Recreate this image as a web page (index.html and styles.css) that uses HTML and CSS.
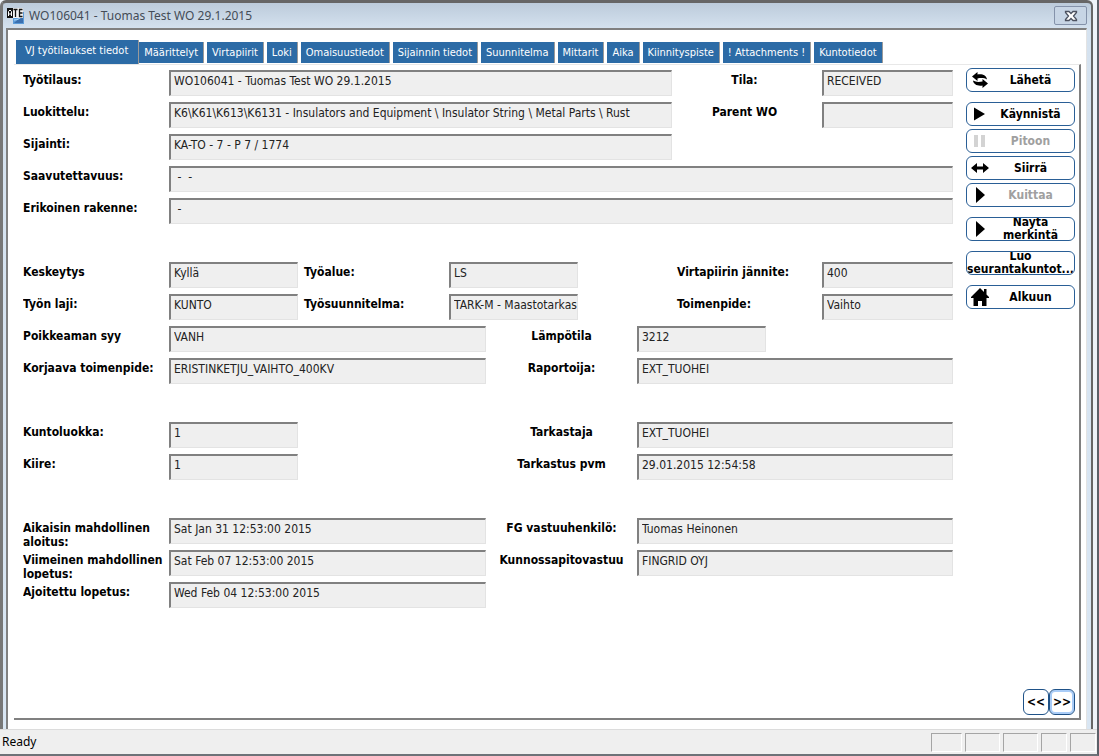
FILE: index.html
```html
<!DOCTYPE html>
<html lang="fi">
<head>
<meta charset="utf-8">
<title>WO106041 - Tuomas Test WO 29.1.2015</title>
<link rel="stylesheet" href="styles.css">
</head>
<body>
<div class="app">
  <div class="window">
    <header class="titlebar">
      <svg class="app-icon" width="20" height="18" viewBox="0 0 20 18" aria-hidden="true">
        <rect x="7" y="5" width="11" height="12" fill="#5b9bd8"/>
        <path d="M8 16h9V8z" fill="#3b6fae"/>
        <path d="M8 13c4 0 7-2 9-5" stroke="#b9dcf5" fill="none"/>
        <rect x="1" y="1" width="6" height="10" fill="#111"/>
        <rect x="7" y="1" width="10" height="10" fill="#f4f4f4"/>
        <path d="M2.500 9V4.500L4 3l1.500 1.500V9M2.500 7h3" stroke="#fff" fill="none"/>
        <path d="M7.500 2.500h4M9.500 2v8M16.500 2.500h-3v7h3M13.500 6h3" stroke="#111" stroke-width="1.300" fill="none"/>
      </svg>
      <h1 class="title">WO106041 - Tuomas Test WO 29.1.2015</h1>
      <button class="close" type="button" aria-label="Close">
        <svg width="14" height="12" viewBox="0 0 14 12" aria-hidden="true">
          <path d="M1.500 1.500h3.500l2 2 2-2h3.500v1L9.500 6l3 3.500v1H9l-2-2-2 2H1.500v-1l3-3.500-3-3.500z" fill="#fff" stroke="#4c5260" stroke-width="1.300"/>
        </svg>
      </button>
    </header>
    <main class="client">
      <nav class="tabs" role="tablist">
        <button class="tab tab-active" type="button" role="tab" aria-selected="true">VJ työtilaukset tiedot</button>
        <button class="tab" type="button" role="tab">Määrittelyt</button>
        <button class="tab" type="button" role="tab">Virtapiirit</button>
        <button class="tab" type="button" role="tab">Loki</button>
        <button class="tab" type="button" role="tab">Omaisuustiedot</button>
        <button class="tab" type="button" role="tab">Sijainnin tiedot</button>
        <button class="tab" type="button" role="tab">Suunnitelma</button>
        <button class="tab" type="button" role="tab">Mittarit</button>
        <button class="tab" type="button" role="tab">Aika</button>
        <button class="tab" type="button" role="tab">Kiinnityspiste</button>
        <button class="tab" type="button" role="tab">! Attachments !</button>
        <button class="tab" type="button" role="tab">Kuntotiedot</button>
      </nav>
      <section class="panel">
        <form class="form">
          <label class="label c1" for="wo">Työtilaus:</label>
          <input class="field f-long" id="wo" readonly value="WO106041 - Tuomas Test WO 29.1.2015">
          <label class="label c8 centered" for="status">Tila:</label>
          <input class="field f-last" id="status" readonly value="RECEIVED">

          <label class="label c1" for="class">Luokittelu:</label>
          <input class="field f-long" id="class" readonly value="K6\K61\K613\K6131 - Insulators and Equipment \ Insulator String \ Metal Parts \ Rust">
          <label class="label c8 centered" for="parent">Parent WO</label>
          <input class="field f-last" id="parent" readonly value="">

          <label class="label c1" for="location">Sijainti:</label>
          <input class="field f-long" id="location" readonly value="KA-TO - 7 - P 7 / 1774">

          <label class="label c1" for="access">Saavutettavuus:</label>
          <input class="field f-full" id="access" readonly value=" -  -">

          <label class="label c1" for="structure">Erikoinen rakenne:</label>
          <input class="field f-full" id="structure" readonly value=" -">

          <div class="spacer"></div>

          <label class="label c1" for="outage">Keskeytys</label>
          <input class="field f-short" id="outage" readonly value="Kyllä">
          <label class="label c3" for="area">Työalue:</label>
          <input class="field f-mid" id="area" readonly value="LS">
          <label class="label c8" for="voltage">Virtapiirin jännite:</label>
          <input class="field f-last" id="voltage" readonly value="400">

          <label class="label c1" for="worktype">Työn laji:</label>
          <input class="field f-short" id="worktype" readonly value="KUNTO">
          <label class="label c3" for="plan">Työsuunnitelma:</label>
          <input class="field f-mid" id="plan" readonly value="TARK-M - Maastotarkas">
          <label class="label c8" for="action">Toimenpide:</label>
          <input class="field f-last" id="action" readonly value="Vaihto">

          <label class="label c1" for="cause">Poikkeaman syy</label>
          <input class="field f-half" id="cause" readonly value="VANH">
          <label class="label c5 centered" for="temp">Lämpötila</label>
          <input class="field f-temp" id="temp" readonly value="3212">

          <label class="label c1" for="fix">Korjaava toimenpide:</label>
          <input class="field f-half" id="fix" readonly value="ERISTINKETJU_VAIHTO_400KV">
          <label class="label c5 centered" for="reporter">Raportoija:</label>
          <input class="field f-right" id="reporter" readonly value="EXT_TUOHEI">

          <div class="spacer"></div>

          <label class="label c1" for="condition">Kuntoluokka:</label>
          <input class="field f-short" id="condition" readonly value="1">
          <label class="label c5 centered" for="inspector">Tarkastaja</label>
          <input class="field f-right" id="inspector" readonly value="EXT_TUOHEI">

          <label class="label c1" for="urgency">Kiire:</label>
          <input class="field f-short" id="urgency" readonly value="1">
          <label class="label c5 centered" for="inspected">Tarkastus pvm</label>
          <input class="field f-right" id="inspected" readonly value="29.01.2015 12:54:58">

          <div class="spacer"></div>

          <label class="label c1" for="earliest">Aikaisin mahdollinen aloitus:</label>
          <input class="field f-half" id="earliest" readonly value="Sat Jan 31 12:53:00 2015">
          <label class="label c5 centered" for="owner">FG vastuuhenkilö:</label>
          <input class="field f-right" id="owner" readonly value="Tuomas Heinonen">

          <label class="label c1" for="latest">Viimeinen mahdollinen lopetus:</label>
          <input class="field f-half" id="latest" readonly value="Sat Feb 07 12:53:00 2015">
          <label class="label c5 centered" for="maint">Kunnossapitovastuu</label>
          <input class="field f-right" id="maint" readonly value="FINGRID OYJ">

          <label class="label c1" for="scheduled">Ajoitettu lopetus:</label>
          <input class="field f-half" id="scheduled" readonly value="Wed Feb 04 12:53:00 2015">
        </form>

        <aside class="side">
          <div class="actions">
            <button class="action" type="button">
              <svg class="icon" width="18" height="18" viewBox="0 0 18 18" aria-hidden="true"><path d="M1 5.500L6.500 1v2.500c5-.8 9 1 9.500 5C13.500 7 10.500 6.800 6.500 7.500V10zM17 12.500L11.500 17v-2.500c-5 .8-9-1-9.500-5 2.500 1.500 5.500 1.700 9.500 1V8z"/></svg>
              <span class="caption">Lähetä</span>
            </button>
            <button class="action group-start" type="button">
              <svg class="icon" width="18" height="18" viewBox="0 0 18 18" aria-hidden="true"><path d="M3 2.500L14 9 3 15.500z"/></svg>
              <span class="caption">Käynnistä</span>
            </button>
            <button class="action" type="button" disabled>
              <svg class="icon pale" width="18" height="18" viewBox="0 0 18 18" aria-hidden="true"><path d="M3 3h4v12H3zM10 3h4v12h-4z"/></svg>
              <span class="caption">Pitoon</span>
            </button>
            <button class="action" type="button">
              <svg class="icon" width="18" height="18" viewBox="0 0 18 18" aria-hidden="true"><path d="M0 9l6-5v3.500h6V4l6 5-6 5v-3.500H6V14z"/></svg>
              <span class="caption">Siirrä</span>
            </button>
            <button class="action" type="button" disabled>
              <svg class="icon" width="18" height="18" viewBox="0 0 18 18" aria-hidden="true"><path d="M5 1l9 8-9 8z"/></svg>
              <span class="caption">Kuittaa</span>
            </button>
            <button class="action group-start" type="button">
              <svg class="icon" width="18" height="18" viewBox="0 0 18 18" aria-hidden="true"><path d="M5 1l9 8-9 8z"/></svg>
              <span class="caption">Näytä merkintä</span>
            </button>
            <button class="action action-text group-start" type="button">
              <span class="caption">Luo seurantakuntot...</span>
            </button>
            <button class="action group-start" type="button">
              <svg class="icon" width="18" height="18" viewBox="0 0 18 18" aria-hidden="true"><path d="M9 0l4 4V1h2.500v5.500L18 9v1h-2.500v8H11v-5H7v5H2.500v-8H0V9z"/></svg>
              <span class="caption">Alkuun</span>
            </button>
          </div>
          <div class="pager">
            <button class="page" type="button">&lt;&lt;</button>
            <button class="page page-focus" type="button">&gt;&gt;</button>
          </div>
        </aside>
      </section>
    </main>
  </div>
  <footer class="statusbar">
    <span class="status-text">Ready</span>
    <span class="cell cell-m"></span>
    <span class="cell cell-l"></span>
    <span class="cell cell-l"></span>
    <span class="cell cell-s"></span>
    <span class="cell cell-s"></span>
  </footer>
</div>
</body>
</html>
```
FILE: styles.css
```css
* { box-sizing: border-box; }

body {
  margin: 0;
  background: #6b6b6b;
  color: #000;
  font: 12px/14px "DejaVu Sans Condensed", "DejaVu Sans", sans-serif;
}

button, input { font: inherit; color: inherit; margin: 0; }

.app {
  display: flex;
  flex-direction: column;
  min-height: 100vh;
  border-bottom: 2px solid #6e7278;
  border-right: 2px solid #5c6068;
  background: #eef3f9;
}

.window {
  flex: 1;
  display: flex;
  flex-direction: column;
  margin-right: 4px;
  border: solid #666;
  border-width: 3px 2px 0 3px;
  border-left-color: #777;
  border-radius: 6px 6px 0 0;
  padding: 0 4px 0 3px;
  background: linear-gradient(#bccbdb, #d5e2ef 26px, #d9e6f3);
}

.titlebar {
  display: flex;
  align-items: center;
  height: 25px;
}

.app-icon { flex: none; }

.title {
  flex: 1;
  margin: 0 0 0 3px;
  font: 12px/18px "Noto Sans", sans-serif;
  color: #444c57;
}

.close {
  display: flex;
  align-items: center;
  justify-content: center;
  width: 33px;
  height: 19px;
  padding: 0;
  border: 1px solid #8492aa;
  border-radius: 2px;
  background: #c7d5e5;
}

.client {
  flex: 1;
  display: flex;
  flex-direction: column;
  padding: 10px 5px 9px 6px;
  border: solid #808080;
  border-width: 2px 1px 0 2px;
  border-right-color: #e3e3e3;
  background: #fff;
}

.tabs {
  display: flex;
  align-items: flex-end;
  gap: 3px;
  height: 24px;
  padding: 0 0 1px 2px;
}

.tab {
  height: 21px;
  padding: 0 5px;
  border: 0;
  border-right: 1px solid #9a9a9a;
  background: #2c6ba6;
  color: #fff;
  font-size: 11px;
  white-space: nowrap;
}

.tab-active {
  height: 24px;
  margin: 0 -3px -1px 0;
  padding: 0 10px 2px 9px;
}

.panel {
  flex: 1;
  display: flex;
  gap: 13px;
  padding: 3px 4px 3px 9px;
  border: solid #808080;
  border-width: 1px 2px 2px 0;
  border-top-color: #e8e8e8;
}

.form {
  flex: 1;
  display: grid;
  grid-template-columns:
    minmax(0, 146fr) minmax(0, 129fr) minmax(0, 151fr) minmax(0, 37fr) minmax(0, 92fr)
    minmax(0, 59fr) minmax(0, 35fr) minmax(0, 94fr) minmax(0, 56fr) minmax(0, 131fr);
  grid-auto-rows: 26px;
  row-gap: 6px;
  align-content: start;
  padding-top: 2px;
}

.label {
  height: 26px;
  margin-top: 3px;
  overflow: hidden;
  font-weight: bold;
}

.centered { text-align: center; }
.c1 { grid-column: 1; }
.c3 { grid-column: 3; padding-left: 6px; }
.c5 { grid-column: 5 / 7; }
.c8 { grid-column: 8 / 10; padding-left: 5px; }
.c8.centered { padding: 0 5px 0 0; }

.field {
  width: 100%;
  min-width: 0;
  height: 26px;
  padding: 0 0 5px 3px;
  border: solid #e3e3e3;
  border-width: 2px 1px 1px 2px;
  border-top-color: #808080;
  border-left-color: #808080;
  border-radius: 0;
  background: #efefef;
  color: #222;
  outline: 0;
}

.f-short { grid-column: 2; }
.f-half { grid-column: 2 / 5; }
.f-long { grid-column: 2 / 8; }
.f-full { grid-column: 2 / 11; }
.f-mid { grid-column: 4 / 6; }
.f-temp { grid-column: 7 / 9; }
.f-right { grid-column: 7 / 11; }
.f-last { grid-column: 10; }
.spacer { grid-column: 1 / -1; }

.side {
  display: flex;
  flex-direction: column;
  justify-content: space-between;
  width: 109px;
}

.actions {
  display: flex;
  flex-direction: column;
  gap: 3px;
}

.action {
  display: flex;
  align-items: center;
  width: 100%;
  height: 24px;
  padding: 0 2px 0 4px;
  border: 1px solid #2a5f96;
  border-radius: 6px;
  background: #fff;
  font-weight: bold;
  line-height: 13px;
  overflow: hidden;
}

.action-text { padding: 0; }
.action:disabled { color: #a0a0a0; }
.group-start { margin-top: 7px; }
.icon { flex: none; fill: #000; }
.pale { fill: #d3d3d3; }
.caption { flex: 1; text-align: center; }

.pager { display: flex; justify-content: flex-end; }

.page {
  width: 26px;
  height: 26px;
  padding: 0;
  border: 1px solid #1f5288;
  border-radius: 6px;
  background: #fff;
  font-weight: bold;
}

.page-focus { box-shadow: inset 0 0 0 2px #a9ccf7; }

.statusbar {
  display: flex;
  align-items: center;
  gap: 3px;
  height: 25px;
  padding: 0 1px 0 2px;
  border-top: 1px solid #dcdcdc;
  background: #efefef;
}

.status-text { flex: 1; font: 12px/18px "Noto Sans", sans-serif; }

.cell {
  height: 19px;
  border: 1px solid #fff;
  border-top-color: #a5a5a5;
  border-left-color: #a5a5a5;
}

.cell-s { width: 26px; }
.cell-m { width: 31px; }
.cell-l { width: 35px; }
```
